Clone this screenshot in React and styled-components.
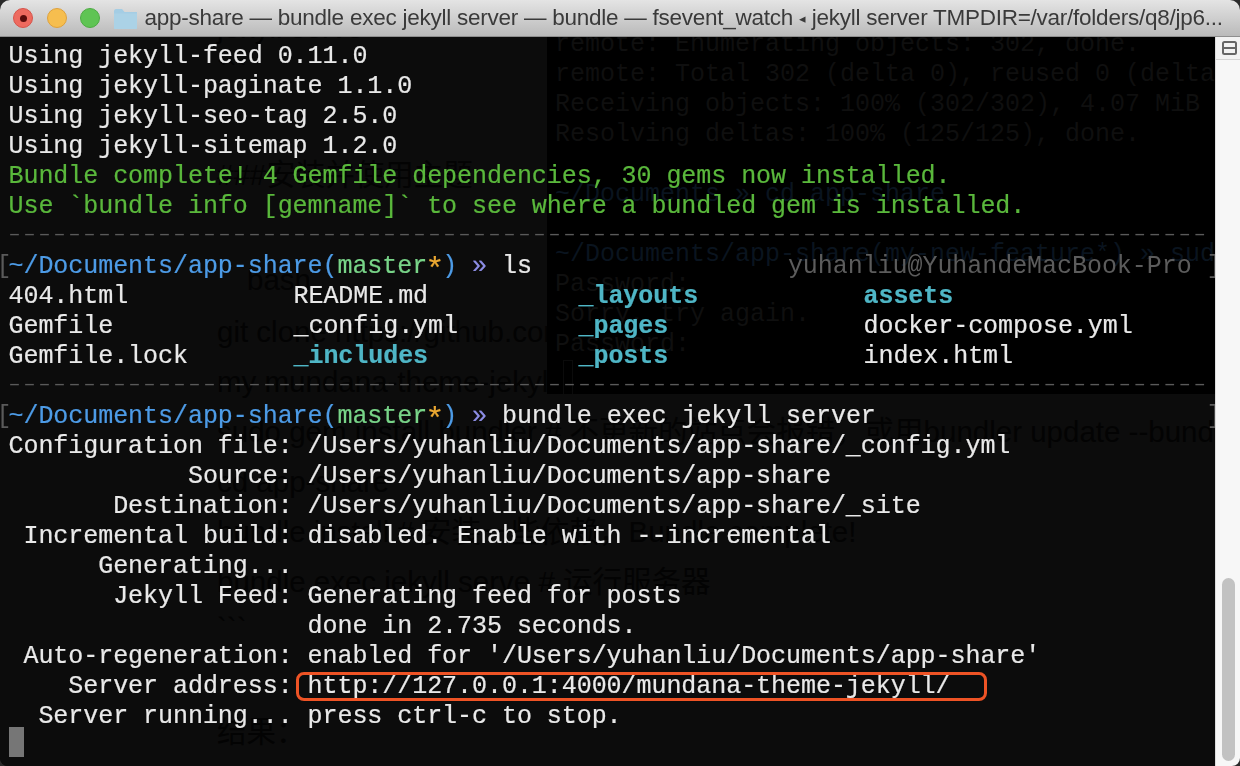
import React from 'react';
import styled, { createGlobalStyle } from 'styled-components';

const GlobalStyle = createGlobalStyle`
  html, body {
    margin: 0;
    padding: 0;
    height: 100%;
    background: #2a2a2a;
    overflow: hidden;
  }
`;

const mono = '"Liberation Mono", "DejaVu Sans Mono", monospace';
const sans = '"Liberation Sans", "Noto Sans CJK SC", sans-serif';

const white = '#e9e9e9';
const green = '#5ab83c';
const blue = '#4d9be6';
const branch = '#78d488';
const star = '#eba832';
const purple = '#8d8ee6';
const teal = '#4fb6c6';
const dim = '#5c5c5c';

const Window = styled.div`
  width: 1240px;
  height: 766px;
  display: flex;
  flex-direction: column;
  overflow: hidden;
  border-radius: 10px 10px 8px 8px;
  background: #0c0c0c;
`;

const TitleBar = styled.div`
  flex: 0 0 37px;
  box-sizing: border-box;
  display: flex;
  align-items: center;
  padding-left: 13px;
  background: linear-gradient(#e4e4e4, #bababa);
  border-bottom: 1px solid #8e8e8e;
`;

const Light = styled.span`
  flex: none;
  width: 20px;
  height: 20px;
  margin-right: 13.5px;
  box-sizing: border-box;
  border-radius: 50%;
  display: flex;
  align-items: center;
  justify-content: center;
  background: ${p => p.$color};
  border: 1px solid ${p => p.$edge};
`;

const LightDot = styled.span`
  width: 7px;
  height: 7px;
  border-radius: 50%;
  background: #5a0d0c;
`;

const Folder = styled.svg`
  flex: none;
  margin-left: -1px;
`;

const TitleText = styled.div`
  margin-left: 7px;
  font: 22.5px ${sans};
  letter-spacing: -0.25px;
  color: #3a3a3a;
  white-space: nowrap;
  filter: blur(0.3px);
`;

const TitleArrow = styled.span`
  font-size: 13px;
  vertical-align: 2px;
`;

const Body = styled.div`
  flex: 1;
  display: flex;
  min-height: 0;
`;

const Pane = styled.div`
  flex: 1;
  position: relative;
  overflow: hidden;
  background: #0c0c0c;
`;

const GhostDoc = styled.div`
  position: absolute;
  top: -34px;
  left: 217px;
  width: 1000px;
  font: 29.5px/50px ${sans};
  color: #030303;
  white-space: pre;
`;

const GhostLine = styled.div`
  height: 50px;
  margin-top: ${p => p.$gap || 0}px;
  padding-left: ${p => p.$indent || 0}px;
`;

const GhostPanel = styled.div`
  position: absolute;
  top: 0;
  left: 547px;
  right: 0;
  height: 357px;
  overflow: hidden;
  background: #000;
`;

const GhostTerm = styled.div`
  margin: -7px 0 0 8px;
  font: 25px/30px ${mono};
  color: #0f0f0f;
  white-space: pre;
`;

const GhostRow = styled.div`
  height: 30px;
  color: ${p => p.$color || 'inherit'};
`;

const GhostCursor = styled.div`
  width: 8px;
  height: 36px;
  margin: 0 0 0 8px;
  border: 1px solid #0b0b0b;
`;

const Term = styled.div`
  position: relative;
  padding-left: 8.5px;
  font: 25px/40px ${mono};
  letter-spacing: -0.05px;
  color: ${white};
  white-space: pre;
  -webkit-text-stroke: 0.2px;
  filter: blur(0.3px);
`;

const Row = styled.div`
  height: 30px;
  color: ${p => p.$color || 'inherit'};
`;

const Rule = styled.div`
  height: 30px;
  width: 1200px;
  font-size: 20px;
  line-height: 36px;
  letter-spacing: 3px;
  color: #5a5a5a;
  -webkit-text-stroke: 0;
`;

const PromptRow = styled.div`
  height: 30px;
  width: 1213px;
  display: flex;
  justify-content: space-between;
`;

const Bracket = styled.span`
  display: inline-block;
  width: 8px;
  margin-left: -8px;
  color: #5a5a5a;
  -webkit-text-stroke: 0;
  transform: translateX(-4px);
`;

const Tint = styled.span`
  color: ${p => p.$color};
`;

const Star = styled.span`
  display: inline-block;
  width: 15px;
  font-size: 32px;
  line-height: 30px;
  text-indent: -2px;
  color: ${star};
  transform: translateY(6px);
`;

const RightPrompt = styled.span`
  color: ${dim};
  -webkit-text-stroke: 0;
`;

const LsGrid = styled.div`
  display: grid;
  grid-template-columns: repeat(4, 285px);
  grid-template-rows: repeat(3, 30px);
  grid-auto-flow: column;
`;

const LsItem = styled.span`
  color: ${p => (p.$dir ? teal : 'inherit')};
  font-weight: ${p => (p.$dir ? 700 : 400)};
`;

const Cursor = styled.div`
  width: 15px;
  height: 30px;
  background: #767676;
`;

const Highlight = styled.div`
  position: absolute;
  top: 635px;
  left: 296px;
  width: 691px;
  height: 29px;
  box-sizing: border-box;
  border: 3px solid #ee5325;
  border-radius: 8px;
`;

const ScrollTrack = styled.div`
  flex: 0 0 25px;
  display: flex;
  flex-direction: column;
  background: #f7f7f7;
  border-left: 1px solid #dcdcdc;
  box-sizing: border-box;
`;

const SplitButton = styled.div`
  flex: 0 0 23px;
  box-sizing: border-box;
  display: flex;
  align-items: flex-start;
  justify-content: center;
  padding: 4px 0 0 2px;
  background: #f2f2f2;
  border-bottom: 1px solid #d4d4d4;
`;

const Thumb = styled.div`
  width: 13px;
  height: 183px;
  margin: 518px 0 0 6px;
  border-radius: 7px;
  background: #c2c2c2;
`;

const Prompt = ({ command, right }) => (
  <PromptRow>
    <span>
      <Bracket>[</Bracket>
      <Tint $color={blue}>~/Documents/app-share(</Tint>
      <Tint $color={branch}>master</Tint>
      <Star>*</Star>
      <Tint $color={blue}>)</Tint>
      {' '}
      <Tint $color={purple}>»</Tint>
      {' ' + command}
    </span>
    <RightPrompt>{right}</RightPrompt>
  </PromptRow>
);

const ghostLines = [
  { text: 'jekyll serve', gap: 0 },
  { text: '```', gap: -6 },
  { text: '###安装并使用主题', gap: 53 },
  { text: 'bash', gap: 55, indent: 30 },
  { text: 'git clone https://github.com/mundana-theme-jekyll', gap: 2 },
  { text: 'my mundana-theme-jekyll' },
  { text: 'sudo gem install bundler # 不更新的站点会报错，或用bundler update --bundler' },
  { text: 'cd app-share' },
  { text: 'bundle install # 安装一些依赖，Bundle complete!' },
  { text: 'bundle exec jekyll serve # 运行服务器' },
  { text: '```', gap: -4 },
  { text: '结果：', gap: 54 },
];

const ghostTerm = [
  'remote: Enumerating objects: 302, done.',
  'remote: Total 302 (delta 0), reused 0 (delta 0)',
  'Receiving objects: 100% (302/302), 4.07 MiB',
  'Resolving deltas: 100% (125/125), done.',
  ' ',
  '~/Documents » cd app-share',
  ' ',
  '~/Documents/app-share(my-new-feature*) » sudo gem',
  'Password:',
  'Sorry, try again.',
  'Password:',
];

const lsItems = [
  ['404.html'], ['Gemfile'], ['Gemfile.lock'],
  ['README.md'], ['_config.yml'], ['_includes', true],
  ['_layouts', true], ['_pages', true], ['_posts', true],
  ['assets', true], ['docker-compose.yml'], ['index.html'],
];

const rule = '–'.repeat(80);

const SplitIcon = () => (
  <svg width="15" height="14" viewBox="0 0 15 14" fill="none">
    <rect x="1" y="1" width="13" height="12" rx="1.5" stroke="#666" strokeWidth="2" />
    <rect x="1" y="6" width="13" height="2" fill="#666" />
  </svg>
);

const FolderIcon = () => (
  <Folder width="25" height="21" viewBox="0 0 25 21">
    <path d="M1 3.5C1 2 1.8 1 3 1h6l2.5 3H24v15.5c0 .8-.6 1.5-1.5 1.5h-20C1.600 21 1 20.300 1 19.500z" fill="#a4cde4" />
    <path d="M1 5.500h23V20c0 .6-.5 1-1 1H2c-.5 0-1-.4-1-1z" fill="#abd2e6" />
  </Folder>
);

export default function App() {
  return (
    <>
      <GlobalStyle />
      <Window>
        <TitleBar>
          <Light $color="#ee6a5f" $edge="#d5534a"><LightDot /></Light>
          <Light $color="#f6be4f" $edge="#dea13c" />
          <Light $color="#5fc454" $edge="#4dab43" />
          <FolderIcon />
          <TitleText>app-share — bundle exec jekyll server — bundle — fsevent_watch <TitleArrow>◂</TitleArrow> jekyll server TMPDIR=/var/folders/q8/jp6...</TitleText>
        </TitleBar>
        <Body>
          <Pane>
            <GhostDoc>
              {ghostLines.map((l, i) => (
                <GhostLine key={i} $gap={l.gap} $indent={l.indent}>{l.text}</GhostLine>
              ))}
            </GhostDoc>
            <GhostPanel>
              <GhostTerm>
                {ghostTerm.map((t, i) => (
                  <GhostRow key={i} $color={t.startsWith('~') ? '#0a141f' : undefined}>{t}</GhostRow>
                ))}
                <GhostCursor />
              </GhostTerm>
            </GhostPanel>
            <Term>
              <Row>Using jekyll-feed 0.11.0</Row>
              <Row>Using jekyll-paginate 1.1.0</Row>
              <Row>Using jekyll-seo-tag 2.5.0</Row>
              <Row>Using jekyll-sitemap 1.2.0</Row>
              <Row $color={green}>Bundle complete! 4 Gemfile dependencies, 30 gems now installed.</Row>
              <Row $color={green}>Use `bundle info [gemname]` to see where a bundled gem is installed.</Row>
              <Rule>{rule}</Rule>
              <Prompt command="ls" right="yuhanliu@YuhandeMacBook-Pro ]" />
              <LsGrid>
                {lsItems.map(([name, dir]) => (
                  <LsItem key={name} $dir={dir}>{name}</LsItem>
                ))}
              </LsGrid>
              <Rule>{rule}</Rule>
              <Prompt command="bundle exec jekyll server" right=" ]" />
              <Row>Configuration file: /Users/yuhanliu/Documents/app-share/_config.yml</Row>
              <Row>            Source: /Users/yuhanliu/Documents/app-share</Row>
              <Row>       Destination: /Users/yuhanliu/Documents/app-share/_site</Row>
              <Row> Incremental build: disabled. Enable with --incremental</Row>
              <Row>      Generating...</Row>
              <Row>       Jekyll Feed: Generating feed for posts</Row>
              <Row>                    done in 2.735 seconds.</Row>
              <Row> Auto-regeneration: enabled for '/Users/yuhanliu/Documents/app-share'</Row>
              <Row>    Server address: http://127.0.0.1:4000/mundana-theme-jekyll/</Row>
              <Row>  Server running... press ctrl-c to stop.</Row>
              <Cursor />
              <Highlight />
            </Term>
          </Pane>
          <ScrollTrack>
            <SplitButton><SplitIcon /></SplitButton>
            <Thumb />
          </ScrollTrack>
        </Body>
      </Window>
    </>
  );
}
